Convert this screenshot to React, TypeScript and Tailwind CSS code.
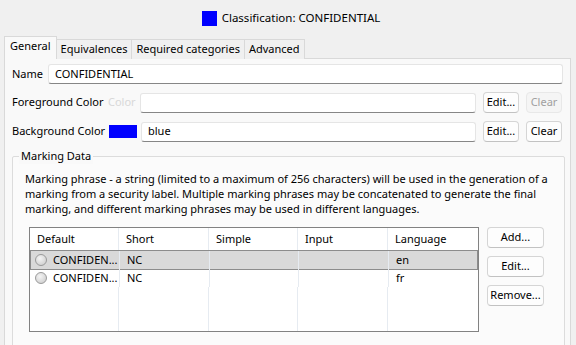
import React from 'react';

const FONT = "font-['Noto_Sans',_'Open_Sans',_sans-serif]";

function Input({ value, className = '' }: { value?: string; className?: string }) {
  return (
    <div
      className={`h-[20px] bg-white border border-[#e5e5e5] border-b-[#868686] rounded-[3px] px-[6px] flex items-center ${className}`}
    >
      {value}
    </div>
  );
}

function Button({ label, disabled, className = '' }: { label: string; disabled?: boolean; className?: string }) {
  return (
    <div
      className={`h-[21px] shrink-0 flex items-center justify-center rounded-[4px] border whitespace-nowrap ${
        disabled
          ? 'bg-[#f5f5f5] border-[#e8e8e8] text-[#a0a0a0]'
          : 'bg-[#fdfdfd] border-[#d5d5d5] border-b-[#c2c2c2] text-black'
      } ${className}`}
    >
      {label}
    </div>
  );
}

function Radio() {
  return (
    <span className="inline-block w-[12px] h-[12px] rounded-full border border-[#9a9a9a] bg-[radial-gradient(circle_at_40%_35%,#f4f4f4,#c8c8c8)] shrink-0" />
  );
}

const cols = 'grid grid-cols-[89px_90px_89px_90px_1fr]';

const rows = [
  { name: 'CONFIDEN...', short: 'NC', lang: 'en', selected: true },
  { name: 'CONFIDEN...', short: 'NC', lang: 'fr', selected: false },
];

const tabs = ['Equivalences', 'Required categories', 'Advanced'];

export default function App() {
  return (
    <div className={`w-[576px] h-[345px] overflow-hidden bg-[#f0f0f0] text-[11px] text-black ${FONT}`}>
      {/* Título */}
      <div className="h-[36px] flex items-center justify-center gap-[5px] pl-[6px]">
        <span className="w-[15px] h-[15px] bg-[#0000ff]" />
        <span className="text-[11.5px]">Classification: CONFIDENTIAL</span>
      </div>

      {/* Abas */}
      <div className="flex items-end pl-[4px] h-[23px] relative z-10">
        <div className="h-[23px] px-[5px] flex items-center bg-[#f9f9f9] border border-[#d9d9d9] border-b-0 pb-[3px]">
          General
        </div>
        {tabs.map((t) => (
          <div
            key={t}
            className="h-[20px] px-[4px] flex items-center bg-[#f0f0f0] border border-[#d9d9d9] border-l-0 border-b-0"
          >
            {t}
          </div>
        ))}
      </div>

      {/* Painel */}
      <div className="mx-[4px] -mt-px w-[567px] h-[300px] bg-[#f9f9f9] border border-[#d9d9d9] px-[7px] pt-[5px]">
        <div className="flex items-center">
          <span className="w-[36px] shrink-0 whitespace-nowrap">Name</span>
          <Input value="CONFIDENTIAL" className="flex-1" />
        </div>

        <div className="flex items-center mt-[8px]">
          <span className="w-[96px] shrink-0 whitespace-nowrap">Foreground Color</span>
          <span className="w-[32px] shrink-0 text-[#d8d8d8]">Color</span>
          <Input className="w-[336px] shrink-0" />
          <Button label="Edit..." className="w-[36px] ml-[7px]" />
          <Button label="Clear" disabled className="w-[36px] ml-[7px]" />
        </div>

        <div className="flex items-center mt-[8px]">
          <span className="w-[97px] shrink-0 whitespace-nowrap">Background Color</span>
          <span className="w-[28px] h-[13px] shrink-0 bg-[#0000ff]" />
          <Input value="blue" className="w-[335px] shrink-0 ml-[4px]" />
          <Button label="Edit..." className="w-[36px] ml-[7px]" />
          <Button label="Clear" className="w-[36px] ml-[7px]" />
        </div>

        {/* Marking Data */}
        <div className="relative mt-[14px] h-[200px] border border-[#dcdcdc] rounded-[2px] bg-[#fbfbfb] w-[553px]">
          <span className="absolute -top-[9px] left-[6px] px-[2px] bg-[#f9f9f9] leading-[16px]">Marking Data</span>
          <p className="pl-[12px] pr-[10px] pt-[14px] leading-[15px]">
            Marking phrase - a string (limited to a maximum of 256 characters) will be used in the generation of a
            marking from a security label. Multiple marking phrases may be concatenated to generate the final
            marking, and different marking phrases may be used in different languages.
          </p>

          <div className="flex mt-[11px] ml-[16px]">
            <div className="w-[450px] h-[105px] border border-[#828282] bg-white flex flex-col">
              <div className={`${cols} h-[23px] items-center`}>
                {['Default', 'Short', 'Simple', 'Input', 'Language'].map((h) => (
                  <div key={h} className="h-full flex items-center pl-[7px] border-r border-[#e6ebf1] last:border-r-0">
                    {h}
                  </div>
                ))}
              </div>
              {rows.map((r, i) => (
                <div
                  key={i}
                  className={`${cols} h-[18px] mx-px ${
                    r.selected ? 'bg-[#d9d9d9] outline outline-1 outline-[#8c8c8c]' : ''
                  }`}
                >
                  <div className="flex items-center gap-[6px] pl-[5px] border-r border-[#e6ebf1] -ml-px">
                    <Radio />
                    <span>{r.name}</span>
                  </div>
                  <div className="flex items-center pl-[7px] border-r border-[#e6ebf1]">{r.short}</div>
                  <div className="border-r border-[#e6ebf1]" />
                  <div className="border-r border-[#e6ebf1]" />
                  <div className="flex items-center pl-[7px]">{r.lang}</div>
                </div>
              ))}
              <div className={`${cols} flex-1`}>
                <div className="border-r border-[#e6ebf1]" />
                <div className="border-r border-[#e6ebf1]" />
                <div className="border-r border-[#e6ebf1]" />
                <div className="border-r border-[#e6ebf1]" />
                <div />
              </div>
            </div>

            <div className="flex flex-col gap-[8px] ml-[8px]">
              <Button label="Add..." className="w-[57px]" />
              <Button label="Edit..." className="w-[57px]" />
              <Button label="Remove..." className="w-[57px]" />
            </div>
          </div>
        </div>
      </div>
    </div>
  );
}
